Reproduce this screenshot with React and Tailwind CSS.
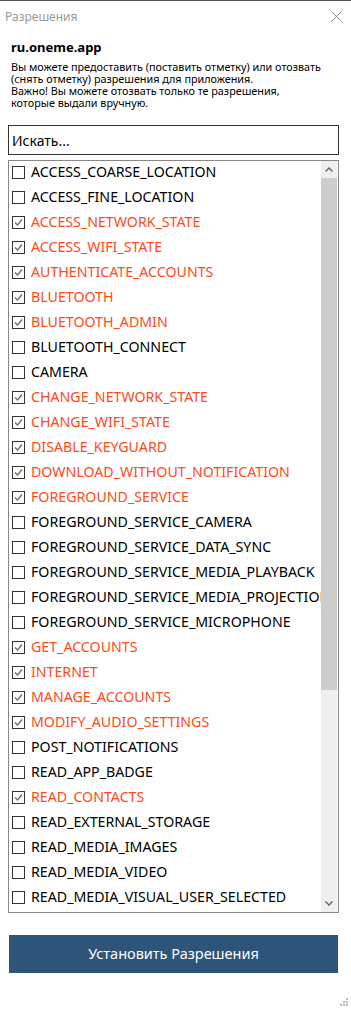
import React, { useState } from "react";

const PERMS = [
  ["ACCESS_COARSE_LOCATION", false],
  ["ACCESS_FINE_LOCATION", false],
  ["ACCESS_NETWORK_STATE", true],
  ["ACCESS_WIFI_STATE", true],
  ["AUTHENTICATE_ACCOUNTS", true],
  ["BLUETOOTH", true],
  ["BLUETOOTH_ADMIN", true],
  ["BLUETOOTH_CONNECT", false],
  ["CAMERA", false],
  ["CHANGE_NETWORK_STATE", true],
  ["CHANGE_WIFI_STATE", true],
  ["DISABLE_KEYGUARD", true],
  ["DOWNLOAD_WITHOUT_NOTIFICATION", true],
  ["FOREGROUND_SERVICE", true],
  ["FOREGROUND_SERVICE_CAMERA", false],
  ["FOREGROUND_SERVICE_DATA_SYNC", false],
  ["FOREGROUND_SERVICE_MEDIA_PLAYBACK", false],
  ["FOREGROUND_SERVICE_MEDIA_PROJECTION", false],
  ["FOREGROUND_SERVICE_MICROPHONE", false],
  ["GET_ACCOUNTS", true],
  ["INTERNET", true],
  ["MANAGE_ACCOUNTS", true],
  ["MODIFY_AUDIO_SETTINGS", true],
  ["POST_NOTIFICATIONS", false],
  ["READ_APP_BADGE", false],
  ["READ_CONTACTS", true],
  ["READ_EXTERNAL_STORAGE", false],
  ["READ_MEDIA_IMAGES", false],
  ["READ_MEDIA_VIDEO", false],
  ["READ_MEDIA_VISUAL_USER_SELECTED", false],
];

const DESC = [
  "Вы можете предоставить (поставить отметку) или отозвать",
  "(снять отметку) разрешения для приложения.",
  "Важно! Вы можете отозвать только те разрешения,",
  "которые выдали вручную.",
];

function CheckBox({ checked }) {
  return (
    <span className="w-[13px] h-[13px] border border-[#333] bg-white shrink-0 flex items-center justify-center">
      {checked && (
        <svg width="9" height="9" viewBox="0 0 9 9">
          <path d="M1 4.5 L3.5 7 L8 1.5" fill="none" stroke="#6b6b6b" strokeWidth="1.3" />
        </svg>
      )}
    </span>
  );
}

export default function App() {
  const [items, setItems] = useState(PERMS);

  const toggle = (i) => {
    setItems((prev) => prev.map((p, j) => (j === i ? [p[0], !p[1]] : p)));
  };

  return (
    <div
      className="w-[351px] h-[1010px] bg-white border-t border-[#555] flex flex-col relative"
      style={{ fontFamily: '"Noto Sans", "Open Sans", sans-serif' }}
    >
      {/* title bar */}
      <div className="h-[31px] flex items-center justify-between pl-[5px] pr-[9px]">
        <span className="text-[12px] text-[#999]">Разрешения</span>
        <svg width="11" height="11" viewBox="0 0 11 11">
          <path d="M0.5 0.5 L10.5 10.5 M10.5 0.5 L0.5 10.5" stroke="#888" strokeWidth="1" />
        </svg>
      </div>

      <div className="px-[11px] pt-[7px]">
        <div className="text-[13px] font-bold text-black leading-[16px]">ru.oneme.app</div>
        <div className="mt-[6px] text-[10.8px] text-black">
          {DESC.map((line) => (
            <div key={line} className="h-[12px] leading-[12px] whitespace-nowrap">
              {line}
            </div>
          ))}
        </div>
      </div>

      <div className="ml-[8px] mr-[12px] mt-[16px] h-[30px] border border-[#333] flex items-center px-[3px]">
        <span className="text-[14px] text-black">Искать...</span>
      </div>

      <div className="ml-[8px] mr-[12px] mt-[5px] h-[753px] border border-[#888] flex overflow-hidden">
        <div className="flex-1 min-w-0 overflow-hidden">
          {items.map(([name, on], i) => (
            <div
              key={name}
              onClick={() => toggle(i)}
              className="h-[25px] flex items-center pl-[3px] pb-[3px] gap-[6px] whitespace-nowrap cursor-default"
            >
              <CheckBox checked={on} />
              <span className={"text-[14.2px] " + (on ? "text-[#ff4a1a]" : "text-black")}>{name}</span>
            </div>
          ))}
        </div>
        <div className="w-[16px] bg-[#efefef] flex flex-col mr-[1px]">
          <div className="h-[17px] flex items-center justify-center">
            <svg width="8" height="5" viewBox="0 0 8 5">
              <path d="M0.5 4.5 L4 1 L7.5 4.5" fill="none" stroke="#606060" strokeWidth="1.3" />
            </svg>
          </div>
          <div className="h-[512px] bg-[#cdcdcd]" />
          <div className="flex-1" />
          <div className="h-[17px] flex items-center justify-center">
            <svg width="8" height="5" viewBox="0 0 8 5">
              <path d="M0.5 0.5 L4 4 L7.5 0.5" fill="none" stroke="#606060" strokeWidth="1.3" />
            </svg>
          </div>
        </div>
      </div>

      <button className="ml-[9px] mr-[13px] mt-[22px] h-[38px] bg-[#2e5479] text-white text-[14.5px]">
        Установить Разрешения
      </button>

      {/* resize grip */}
      <svg className="absolute right-[3px] bottom-[4px]" width="8" height="8" viewBox="0 0 8 8">
        <rect x="6" y="0" width="2" height="2" fill="#bbb" />
        <rect x="3" y="3" width="2" height="2" fill="#bbb" />
        <rect x="6" y="3" width="2" height="2" fill="#bbb" />
        <rect x="0" y="6" width="2" height="2" fill="#bbb" />
        <rect x="3" y="6" width="2" height="2" fill="#bbb" />
        <rect x="6" y="6" width="2" height="2" fill="#bbb" />
      </svg>
    </div>
  );
}
